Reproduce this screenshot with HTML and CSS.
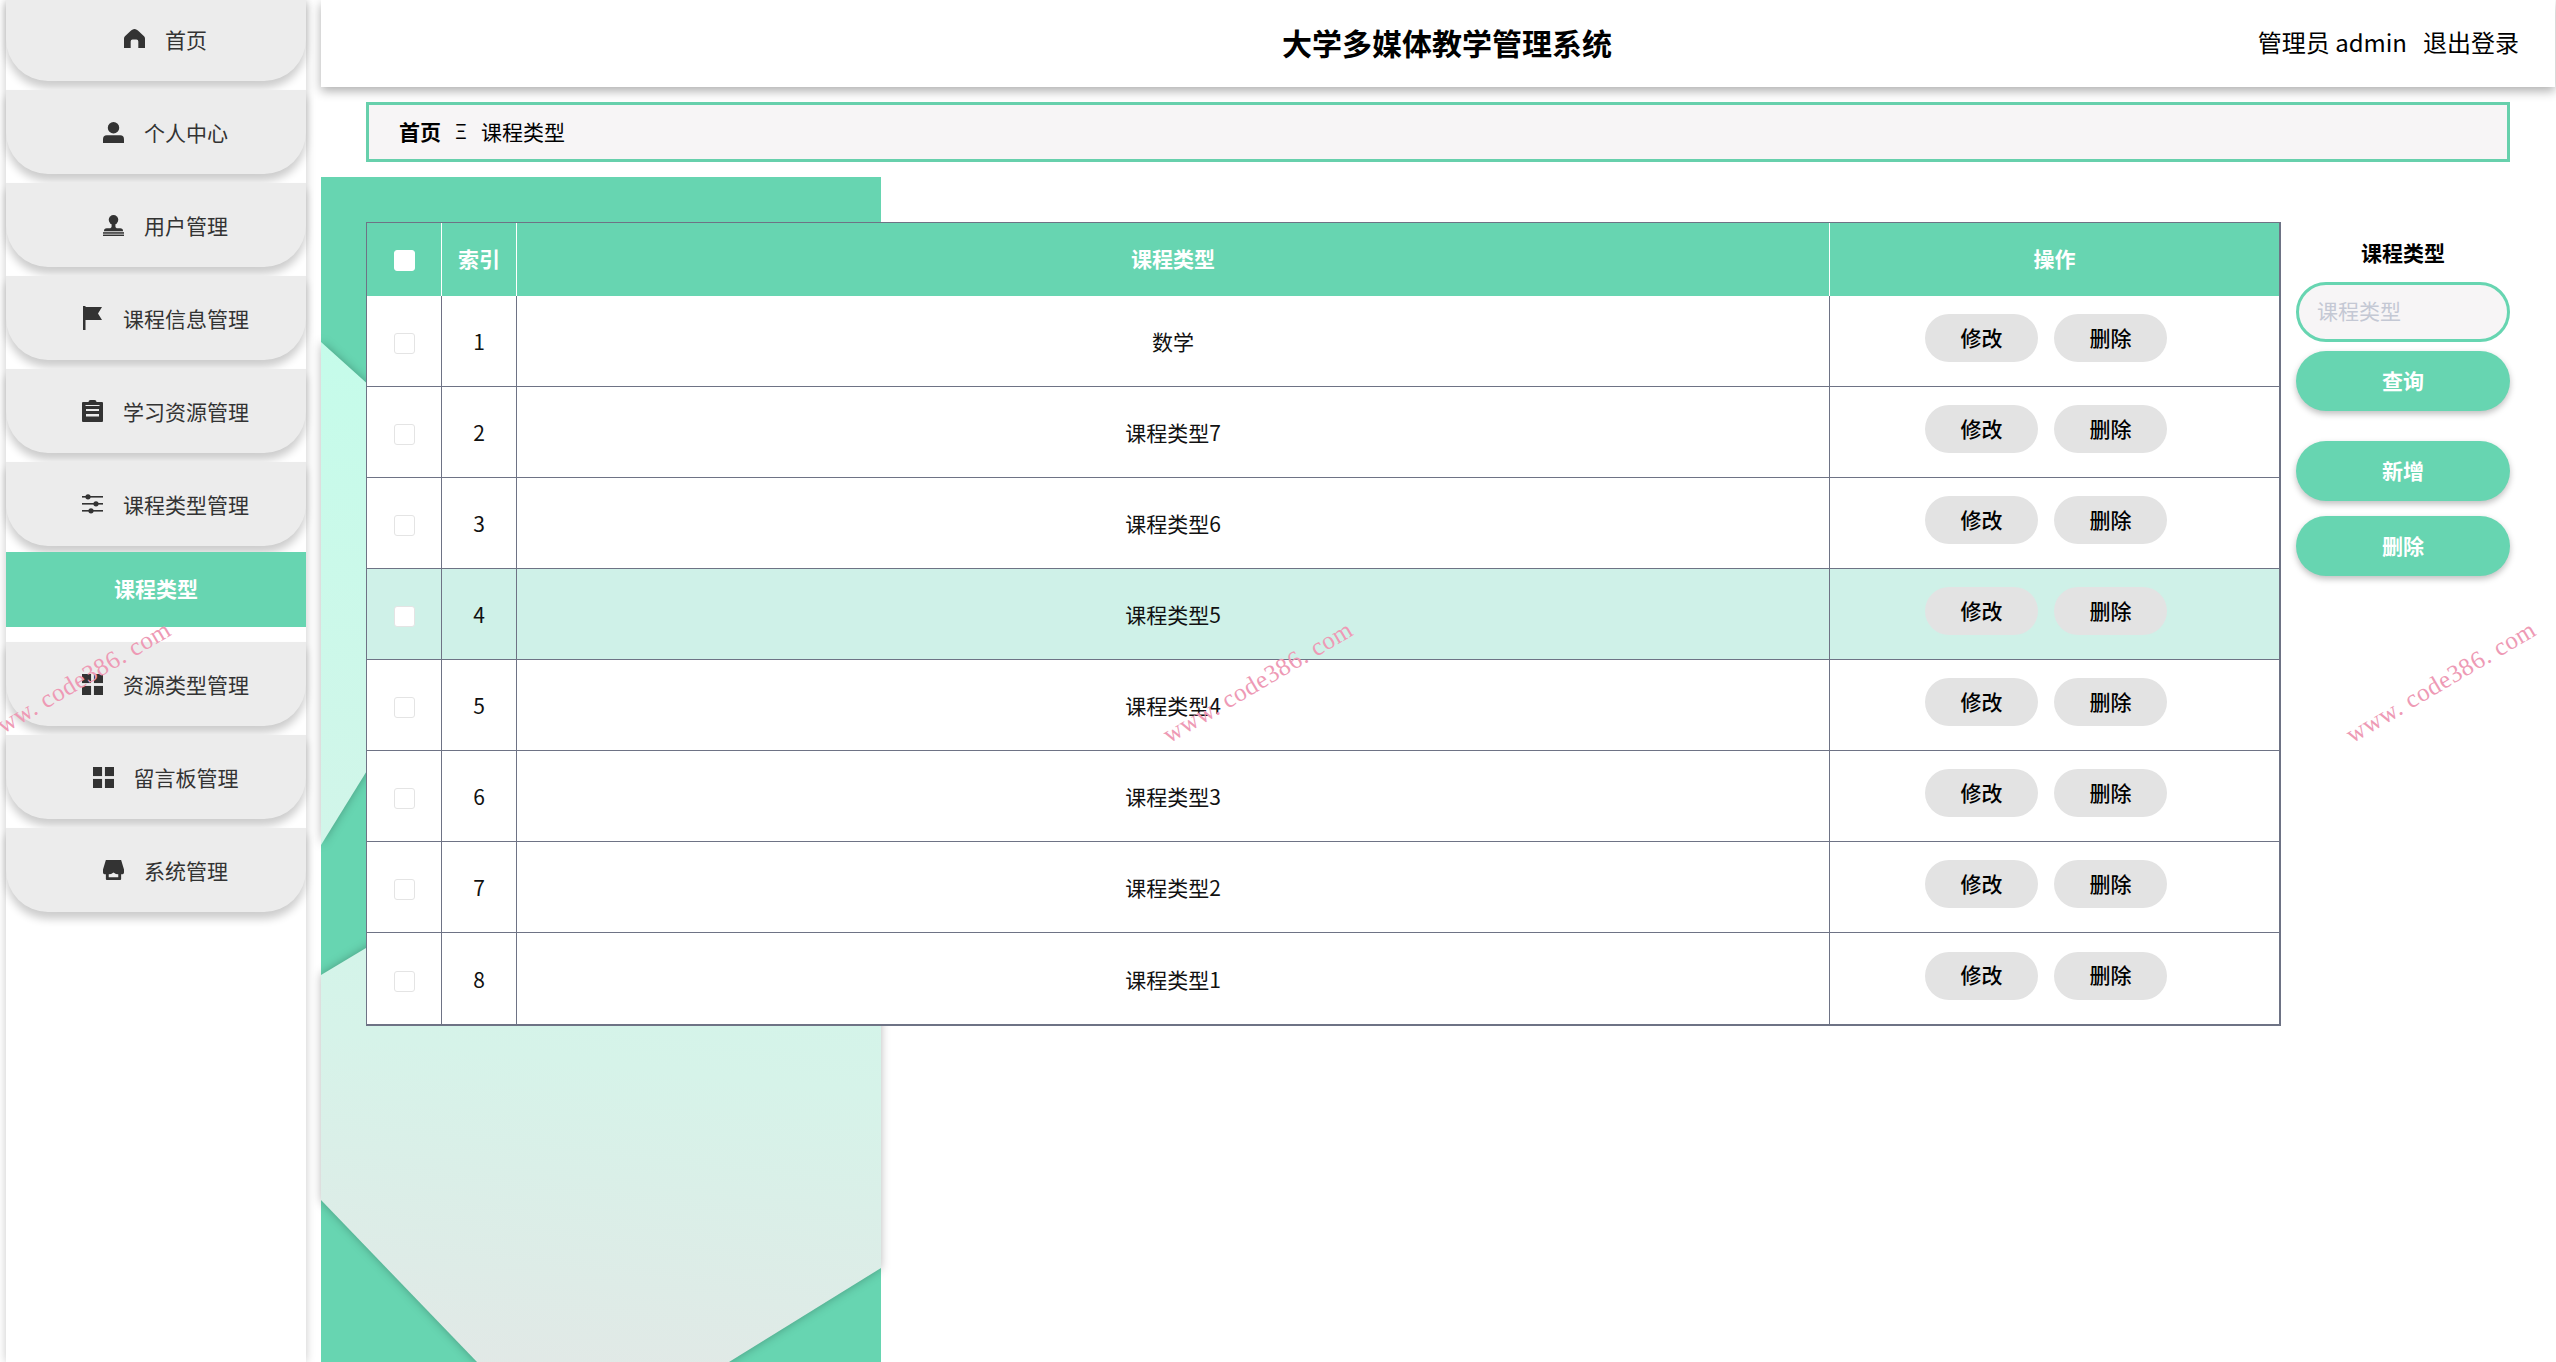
FILE: index.html
```html
<!DOCTYPE html>
<html lang="zh-CN">
<head>
<meta charset="utf-8">
<title>大学多媒体教学管理系统</title>
<link rel="stylesheet" href="styles.css">
</head>
<body>
<div class="page">
  <aside class="sidebar">
    <nav class="menu">
      <a class="menu-item"><svg class="icon" viewBox="0 0 22 20"><path d="M11 0 C9.500 0 8 1 6 3 L1 7.500 Q0 8.500 0 10 V20 H7 V13 Q7 11 9 11 H13 Q15 11 15 13 V20 H22 V10 Q22 8.500 21 7.500 L16 3 C14 1 12.500 0 11 0Z"/></svg><span>首页</span></a>
      <a class="menu-item"><svg class="icon" viewBox="0 0 22 22"><circle cx="11" cy="6" r="6"/><path d="M0 22 V18 Q0 14 4 14 H18 Q22 14 22 18 V22Z"/></svg><span>个人中心</span></a>
      <a class="menu-item"><svg class="icon" viewBox="0 0 22 22"><circle cx="11" cy="5" r="5"/><path d="M9 9 H13 V12 C13 14 15 14 18 14 Q21 14 21 17 H1 Q1 14 4 14 C7 14 9 14 9 12Z"/><rect x="0" y="18" width="22" height="1.6"/><rect x="0" y="20.500" width="22" height="1.500"/></svg><span>用户管理</span></a>
      <a class="menu-item"><svg class="icon" viewBox="-1 0 21 24"><path d="M0 0 H2.500 V1 H19 L15 7.500 L19 14 H2.500 V24 H0Z"/></svg><span>课程信息管理</span></a>
      <a class="menu-item"><svg class="icon" viewBox="0 0 21 22"><path fill-rule="evenodd" d="M6.500 2 Q6.500 0 8.500 0 H12.500 Q14.500 0 14.500 2 H20 Q21 2 21 3 V21 Q21 22 20 22 H1 Q0 22 0 21 V3 Q0 2 1 2Z M4 9 V11 H17 V9Z M4 14 V16.500 H17 V14Z M3.500 5 V6 H17.500 V5Z"/></svg><span>学习资源管理</span></a>
      <a class="menu-item"><svg class="icon" viewBox="0 0 21 20"><rect x="0" y="2" width="21" height="1.600"/><rect x="0" y="9" width="21" height="1.600"/><rect x="0" y="16" width="21" height="1.600"/><circle cx="6" cy="2.800" r="2.600"/><circle cx="14" cy="9.800" r="2.600"/><circle cx="9" cy="16.800" r="2.600"/></svg><span>课程类型管理</span></a>
      <a class="menu-sub">课程类型</a>
      <a class="menu-item"><svg class="icon" viewBox="0 0 22 22"><rect width="9.500" height="9.500"/><rect x="12.500" width="9.500" height="9.500"/><rect y="12.500" width="9.500" height="9.500"/><rect x="12.500" y="12.500" width="9.500" height="9.500"/></svg><span>资源类型管理</span></a>
      <a class="menu-item"><svg class="icon" viewBox="0 0 22 22"><rect width="9.500" height="9.500"/><rect x="12.500" width="9.500" height="9.500"/><rect y="12.500" width="9.500" height="9.500"/><rect x="12.500" y="12.500" width="9.500" height="9.500"/></svg><span>留言板管理</span></a>
      <a class="menu-item"><svg class="icon" viewBox="0 0 22 21"><path fill-rule="evenodd" d="M3 0 H19 L22 10 V13 Q22 15 19 15 V20 Q19 21 18 21 H4 Q3 21 3 20 V15 Q0 15 0 13 V10Z M6 15 V18 H16 V15 Q13.500 15 11 13 Q8.500 15 6 15Z"/></svg><span>系统管理</span></a>
    </nav>
  </aside>

  <div class="main">
    <svg class="backdrop" viewBox="0 0 560 1185" aria-hidden="true">
      <defs>
        <linearGradient id="sheet" gradientUnits="userSpaceOnUse" x1="120" y1="165" x2="0" y2="1185">
          <stop offset="0" stop-color="#c5fcea"/>
          <stop offset=".68" stop-color="#d6f3e9"/>
          <stop offset="1" stop-color="#e2e8e6"/>
        </linearGradient>
      </defs>
      <rect width="560" height="1185" fill="#67d5b1"/>
      <polygon class="sheet" points="0,165 200,345 0,668" fill="url(#sheet)"/>
      <polygon class="sheet" points="0,798 560,462 560,1091 408,1185 156,1185 0,1023" fill="url(#sheet)"/>
    </svg>

    <header class="topbar">
      <div></div>
      <h1 class="title">大学多媒体教学管理系统</h1>
      <div class="user"><span>管理员 admin</span><a>退出登录</a></div>
    </header>

    <div class="crumb"><b>首页</b><i>Ξ</i><span>课程类型</span></div>

    <section class="content">
      <table class="grid">
        <colgroup><col class="c-check"><col class="c-index"><col class="c-name"><col class="c-op"></colgroup>
        <thead>
          <tr><th class="cell-check"><input class="check check-head" type="checkbox"></th><th>索引</th><th>课程类型</th><th>操作</th></tr>
        </thead>
        <tbody>
          <tr><td class="cell-check"><input class="check" type="checkbox"></td><td>1</td><td>数学</td><td class="ops"><button>修改</button><button>删除</button></td></tr>
          <tr><td class="cell-check"><input class="check" type="checkbox"></td><td>2</td><td>课程类型7</td><td class="ops"><button>修改</button><button>删除</button></td></tr>
          <tr><td class="cell-check"><input class="check" type="checkbox"></td><td>3</td><td>课程类型6</td><td class="ops"><button>修改</button><button>删除</button></td></tr>
          <tr class="hover"><td class="cell-check"><input class="check" type="checkbox"></td><td>4</td><td>课程类型5</td><td class="ops"><button>修改</button><button>删除</button></td></tr>
          <tr><td class="cell-check"><input class="check" type="checkbox"></td><td>5</td><td>课程类型4</td><td class="ops"><button>修改</button><button>删除</button></td></tr>
          <tr><td class="cell-check"><input class="check" type="checkbox"></td><td>6</td><td>课程类型3</td><td class="ops"><button>修改</button><button>删除</button></td></tr>
          <tr><td class="cell-check"><input class="check" type="checkbox"></td><td>7</td><td>课程类型2</td><td class="ops"><button>修改</button><button>删除</button></td></tr>
          <tr><td class="cell-check"><input class="check" type="checkbox"></td><td>8</td><td>课程类型1</td><td class="ops"><button>修改</button><button>删除</button></td></tr>
        </tbody>
      </table>

      <div class="side">
        <label class="side-label">课程类型</label>
        <input class="side-input" type="text" placeholder="课程类型">
        <button class="side-btn query">查询</button>
        <button class="side-btn add">新增</button>
        <button class="side-btn del">删除</button>
      </div>
    </section>
  </div>
</div>

<div class="marks" aria-hidden="true">
  <span class="mark m1">www. code386. com</span>
  <span class="mark m2">www. code386. com</span>
  <span class="mark m3">www. code386. com</span>
</div>
</body>
</html>
```

FILE: styles.css
```css
* { box-sizing: border-box; }

html, body {
  margin: 0;
  height: 100%;
  overflow: hidden;
  background: #fff;
  font-family: "Noto Sans CJK SC", "Noto Sans", sans-serif;
  font-size: 21px;
  color: #000;
}

.page {
  display: flex;
  height: 1362px;
  overflow: hidden;
}

/* sidebar */
.sidebar {
  width: 300px;
  flex: none;
  margin: 0 15px 0 6px;
  background: #fff;
  box-shadow: 0 0 9px rgba(0, 0, 0, .22);
  position: relative;
  z-index: 2;
}

.menu {
  display: flex;
  flex-direction: column;
  gap: 9px;
  margin-top: -3px;
}

.menu-item {
  height: 84px;
  flex: none;
  display: flex;
  align-items: center;
  justify-content: center;
  gap: 20px;
  padding-left: 19px;
  background: #ececec;
  color: #333;
  border-radius: 0 0 42px 42px;
  box-shadow: 0 7px 8px rgba(0, 0, 0, .2);
}

.menu-item span { margin-top: -1px; }

.icon {
  width: 21px;
  height: auto;
  flex: none;
  fill: #333;
}

.menu-sub {
  height: 75px;
  margin: -3px 0 6px;
  padding-bottom: 3px;
  display: flex;
  align-items: center;
  justify-content: center;
  background: #67d5b1;
  color: #fff;
  font-weight: 700;
  position: relative;
}

/* main column */
.main {
  flex: 1;
  min-width: 0;
  position: relative;
}

.backdrop {
  position: absolute;
  left: 0;
  top: 177px;
  width: 560px;
  height: 1185px;
  overflow: visible;
}

.sheet { filter: drop-shadow(0 0 5px rgba(0, 0, 0, .28)); }

.topbar {
  position: relative;
  height: 87px;
  margin-right: 1px;
  padding: 0 36px 4px 54px;
  display: grid;
  grid-template-columns: 1fr auto 1fr;
  align-items: center;
  background: #fff;
  box-shadow: 0 4px 10px rgba(0, 0, 0, .32);
}

.title {
  margin: 0;
  font-size: 30px;
  font-weight: 700;
  white-space: nowrap;
}

.user {
  display: flex;
  justify-content: flex-end;
  gap: 16px;
  font-size: 24px;
  white-space: nowrap;
}

.crumb {
  position: relative;
  height: 60px;
  margin: 15px 46px 0 45px;
  padding: 0 0 3px 30px;
  display: flex;
  align-items: center;
  background: #f7f5f6;
  border: 3px solid #67d0ac;
}

.crumb i {
  margin: 0 14px;
  font-style: normal;
  font-size: 20px;
}

.content {
  position: relative;
  margin: 60px 46px 0 45px;
  display: flex;
  gap: 15px;
  align-items: flex-start;
}

/* table */
.grid {
  width: 1915px;
  flex: none;
  table-layout: fixed;
  border-collapse: separate;
  border-spacing: 0;
  border: 1px solid #6e7385;
  border-width: 1px 2px 2px 1px;
  background: #fff;
  text-align: center;
}

.c-check { width: 75px; }
.c-index { width: 75px; }
.c-op { width: 449px; }

.grid th {
  height: 73px;
  padding: 0 0 3px;
  background: #67d5b1;
  color: #fff;
  font-weight: 700;
  border-right: 1px solid #fff;
}

.grid th:last-child { border-right: 0; }

.grid td {
  height: 91px;
  padding: 0;
  border-right: 1px solid #6e7385;
  border-bottom: 1px solid #6e7385;
  color: #111;
}

.grid td:last-child { border-right: 0; }
.grid tbody tr:last-child td { border-bottom: 0; }

.grid .cell-check { padding: 5px 0 0; }
.grid th.cell-check { padding: 2px 0 0; }

.grid tr.hover td { background: #cff1e8; }

.check {
  appearance: none;
  display: block;
  width: 21px;
  height: 21px;
  margin: 0 auto;
  border: 1px solid #e4e4e4;
  border-radius: 3px;
  background: #fff;
}

.check-head { border-color: #fff; }

.grid td.ops { padding: 0 17px 6px 0; }

.ops button {
  width: 113px;
  height: 48px;
  margin: 0 8px;
  padding: 0 0 3px;
  border: 0;
  border-radius: 24px;
  background: #e3e3e3;
  color: #000;
  vertical-align: middle;
  font: 500 21px "Noto Sans CJK SC", sans-serif;
}

/* search column */
.side {
  width: 214px;
  flex: none;
  display: flex;
  flex-direction: column;
  align-items: stretch;
}

.side-label {
  height: 60px;
  line-height: 60px;
  text-align: center;
  font-weight: 700;
}

.side-input {
  height: 60px;
  padding: 0 18px 5px;
  border: 3px solid #67d5b1;
  border-radius: 30px;
  background: #f7f5f6;
  font: 21px "Noto Sans CJK SC", sans-serif;
  outline: none;
}

.side-input::placeholder { color: #c4c8d4; opacity: 1; }

.side-btn {
  height: 60px;
  padding: 0 0 3px;
  border: 0;
  border-radius: 30px;
  background: #67d5b1;
  color: #fff;
  font: 700 21px "Noto Sans CJK SC", sans-serif;
  box-shadow: 0 3px 6px rgba(0, 0, 0, .25);
}

.query { margin-top: 9px; }
.add { margin-top: 30px; }
.del { margin-top: 15px; }

/* watermarks lie over the whole page */
.marks {
  position: absolute;
  inset: 0;
  overflow: hidden;
  pointer-events: none;
  z-index: 5;
}

.mark {
  position: absolute;
  top: 682px;
  font: 25px "Liberation Serif", serif;
  letter-spacing: .6px;
  color: #ee9ab5;
  white-space: nowrap;
  transform: translate(-50%, -50%) rotate(-30.5deg);
}

.m1 { left: 76px; }
.m2 { left: 1258px; }
.m3 { left: 2441px; }
```
